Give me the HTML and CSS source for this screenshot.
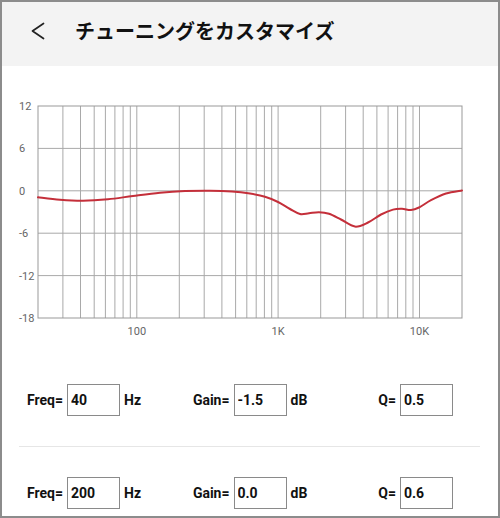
FILE: index.html
```html
<!DOCTYPE html>
<html lang="ja">
<head>
<meta charset="utf-8">
<title>チューニングをカスタマイズ</title>
<link rel="stylesheet" href="styles.css">
</head>
<body>
<div class="frame">
  <header class="header">
    <svg class="back" width="14" height="18" viewBox="0 0 14 18"><polyline points="12.5,1.5 1.5,9 12.5,16.5" fill="none" stroke="#222" stroke-width="1.7" stroke-linecap="round" stroke-linejoin="round"/></svg>
    <h1 class="title">チューニングをカスタマイズ</h1>
  </header>

  <svg class="chart" width="496" height="284" viewBox="2 66 496 284">
    <g class="grid">
      <line x1="38" y1="148.4" x2="462" y2="148.4"/>
      <line x1="38" y1="190.8" x2="462" y2="190.8"/>
      <line x1="38" y1="233.2" x2="462" y2="233.2"/>
      <line x1="38" y1="275.6" x2="462" y2="275.6"/>
      <line x1="62.9" y1="106" x2="62.9" y2="318"/>
      <line x1="80.5" y1="106" x2="80.5" y2="318"/>
      <line x1="94.2" y1="106" x2="94.2" y2="318"/>
      <line x1="105.4" y1="106" x2="105.4" y2="318"/>
      <line x1="114.9" y1="106" x2="114.9" y2="318"/>
      <line x1="123.1" y1="106" x2="123.1" y2="318"/>
      <line x1="130.3" y1="106" x2="130.3" y2="318"/>
      <line x1="136.8" y1="106" x2="136.8" y2="318"/>
      <line x1="179.3" y1="106" x2="179.3" y2="318"/>
      <line x1="204.2" y1="106" x2="204.2" y2="318"/>
      <line x1="221.9" y1="106" x2="221.9" y2="318"/>
      <line x1="235.6" y1="106" x2="235.6" y2="318"/>
      <line x1="246.8" y1="106" x2="246.8" y2="318"/>
      <line x1="256.2" y1="106" x2="256.2" y2="318"/>
      <line x1="264.4" y1="106" x2="264.4" y2="318"/>
      <line x1="271.7" y1="106" x2="271.7" y2="318"/>
      <line x1="278.1" y1="106" x2="278.1" y2="318"/>
      <line x1="320.7" y1="106" x2="320.7" y2="318"/>
      <line x1="345.6" y1="106" x2="345.6" y2="318"/>
      <line x1="363.2" y1="106" x2="363.2" y2="318"/>
      <line x1="376.9" y1="106" x2="376.9" y2="318"/>
      <line x1="388.1" y1="106" x2="388.1" y2="318"/>
      <line x1="397.6" y1="106" x2="397.6" y2="318"/>
      <line x1="405.8" y1="106" x2="405.8" y2="318"/>
      <line x1="413.0" y1="106" x2="413.0" y2="318"/>
      <line x1="419.5" y1="106" x2="419.5" y2="318"/>
    </g>
    <rect class="plot-frame" x="38" y="106" width="424" height="212"/>
    <g class="ylabels">
      <text x="19" y="110">12</text>
      <text x="19" y="152.4">6</text>
      <text x="19" y="194.8">0</text>
      <text x="19" y="237.2">-6</text>
      <text x="19" y="279.6">-12</text>
      <text x="19" y="322">-18</text>
    </g>
    <g class="xlabels">
      <text x="136.8" y="335">100</text>
      <text x="278.1" y="335">1K</text>
      <text x="419.5" y="335">10K</text>
    </g>
    <path id="curve" class="curve" d=""/>
  </svg>

  <section class="params">
    <div class="row">
      <div class="field"><span class="label">Freq=</span><input class="box" value="40"><span class="unit">Hz</span></div>
      <div class="field"><span class="label">Gain=</span><input class="box" value="-1.5"><span class="unit">dB</span></div>
      <div class="field"><span class="label">Q=</span><input class="box" value="0.5"></div>
    </div>
    <div class="divider"></div>
    <div class="row">
      <div class="field"><span class="label">Freq=</span><input class="box" value="200"><span class="unit">Hz</span></div>
      <div class="field"><span class="label">Gain=</span><input class="box" value="0.0"><span class="unit">dB</span></div>
      <div class="field"><span class="label">Q=</span><input class="box" value="0.6"></div>
    </div>
  </section>
</div>
<script src="script.js"></script>
</body>
</html>
```

FILE: styles.css
```css
html, body {
  margin: 0;
  padding: 0;
  background: #fff;
}
.frame {
  width: 500px;
  height: 518px;
  box-sizing: border-box;
  border: 2px solid #8c8c8c;
  overflow: hidden;
  background: #fff;
  font-family: Roboto, "Liberation Sans", "Noto Sans CJK JP", sans-serif;
}
.header {
  height: 64px;
  box-sizing: border-box;
  padding: 0 0 6px 29px;
  background: #f3f3f3;
  display: flex;
  align-items: center;
}
.back {
  display: block;
  flex: none;
}
.title {
  margin: 0 0 0 30px;
  font-family: "Noto Sans CJK JP", sans-serif;
  font-size: 20px;
  font-weight: 700;
  color: #111;
  line-height: 1;
}
.chart {
  display: block;
}
.grid line {
  stroke: #a9a9a9;
  stroke-width: 1;
}
.plot-frame {
  fill: none;
  stroke: #999;
  stroke-width: 1;
}
.ylabels text, .xlabels text {
  font-family: Roboto, "Liberation Sans", sans-serif;
  font-size: 11px;
  fill: #666;
}
.xlabels text {
  text-anchor: middle;
}
.curve {
  fill: none;
  stroke: #c42f3a;
  stroke-width: 2;
  stroke-linejoin: round;
  stroke-linecap: round;
}
.params {
  padding-top: 34px;
}
.row {
  display: grid;
  grid-template-columns: repeat(3, 166.5px);
  height: 32px;
}
.field {
  display: flex;
  align-items: center;
  gap: 4px;
}
.label {
  width: 61px;
  text-align: right;
  font-size: 14px;
  font-weight: 700;
  color: #111;
}
.unit {
  font-size: 14px;
  font-weight: 700;
  color: #111;
}
.box {
  width: 53px;
  height: 32px;
  box-sizing: border-box;
  margin: 0;
  padding: 0 3px;
  border: 1px solid #8a8a8a;
  border-radius: 0;
  background: #fff;
  font-family: Roboto, "Liberation Sans", sans-serif;
  font-size: 14px;
  font-weight: 700;
  color: #111;
  outline: none;
  -webkit-appearance: none;
  appearance: none;
}
.divider {
  height: 1px;
  background: #e6e6e6;
  margin: 30px 18px 30px 17px;
}
```

FILE: script.js
```js
(function () {
  var pts = [
    [38, 197.3], [60, 199.8], [83, 200.8], [108, 199.3], [133, 196],
    [160, 192.8], [185, 191.1], [210, 190.7], [232, 191.5], [250, 193.6],
    [265, 196.8], [278, 202], [290, 209], [300, 214], [309, 213.2],
    [319, 212.2], [329, 213.8], [341, 219.5], [355, 226.6], [368, 222.5],
    [381, 214.5], [393, 209.6], [402, 208.8], [411, 210], [419, 207.5],
    [431, 200.2], [446, 193.5], [462, 190.4]
  ];
  var d = 'M' + pts[0][0] + ' ' + pts[0][1];
  for (var i = 0; i < pts.length - 1; i++) {
    var p0 = pts[i - 1] || pts[i];
    var p1 = pts[i];
    var p2 = pts[i + 1];
    var p3 = pts[i + 2] || p2;
    var c1x = p1[0] + (p2[0] - p0[0]) / 6;
    var c1y = p1[1] + (p2[1] - p0[1]) / 6;
    var c2x = p2[0] - (p3[0] - p1[0]) / 6;
    var c2y = p2[1] - (p3[1] - p1[1]) / 6;
    d += ' C' + c1x.toFixed(2) + ' ' + c1y.toFixed(2) + ' ' +
      c2x.toFixed(2) + ' ' + c2y.toFixed(2) + ' ' + p2[0] + ' ' + p2[1];
  }
  document.getElementById('curve').setAttribute('d', d);
})();
```
